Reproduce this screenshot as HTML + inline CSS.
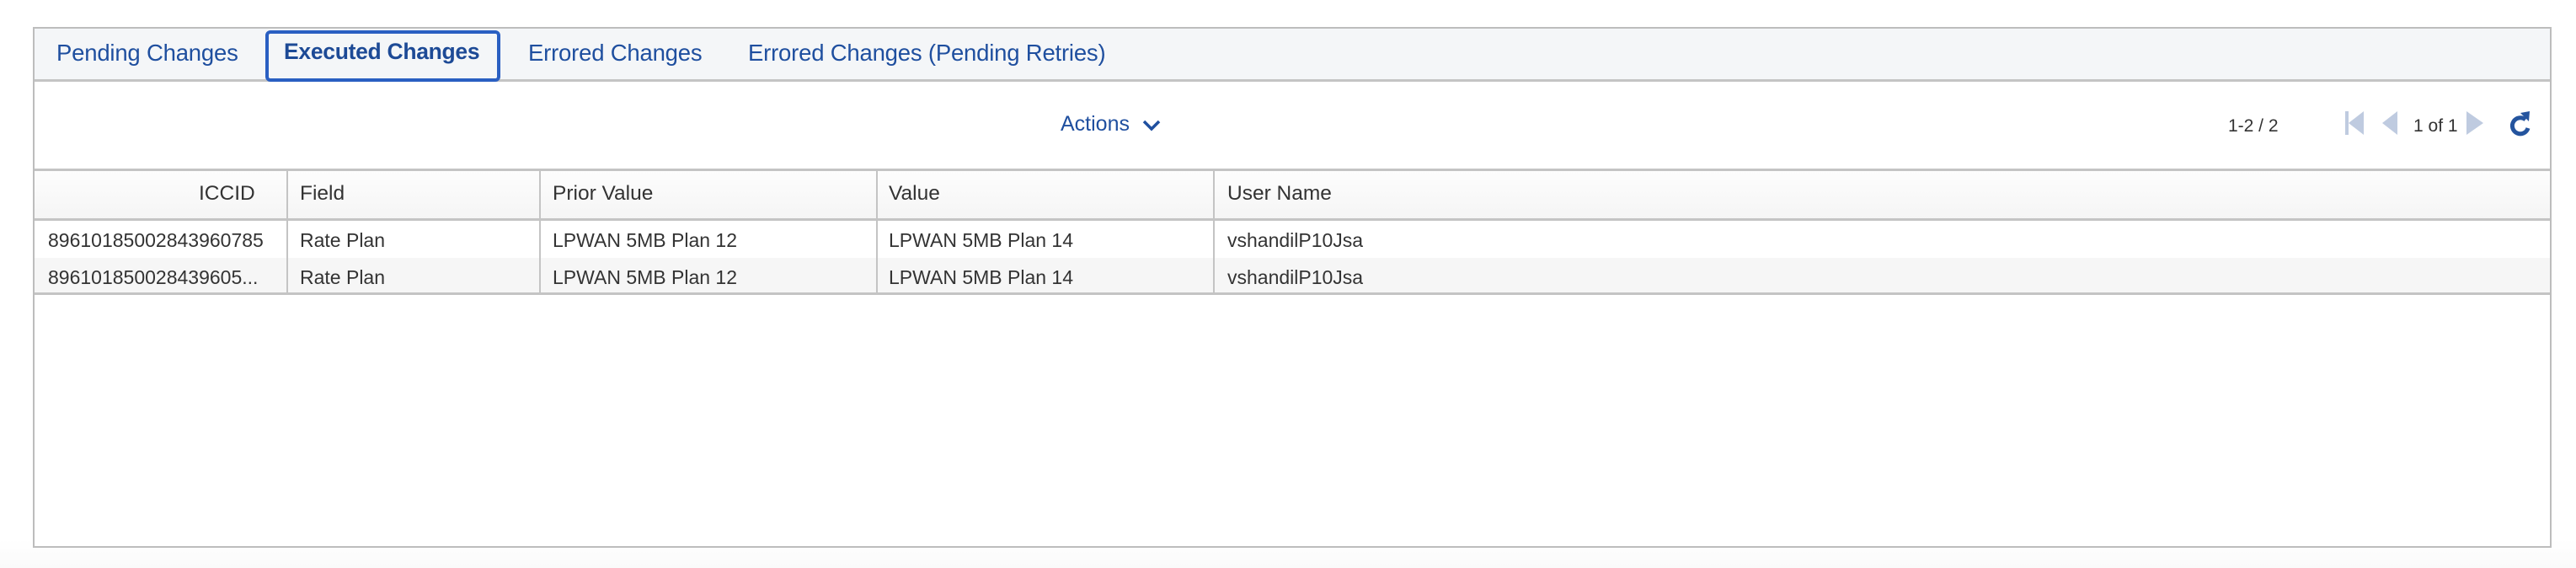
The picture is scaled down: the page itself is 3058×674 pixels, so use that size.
<!DOCTYPE html>
<html><head><meta charset="utf-8"><style>
*{margin:0;padding:0;box-sizing:border-box}
body{width:3058px;height:674px;background:linear-gradient(#fff 0,#fff 640px,#fafafa 674px);font-family:"Liberation Sans",sans-serif;position:relative;overflow:hidden}
.a{position:absolute;white-space:nowrap}
.box{position:absolute;left:39px;top:32px;width:2990px;height:618px;border:2px solid #bdbdbd;background:#fff}
.tabs{position:absolute;left:41px;top:34px;width:2986px;height:63px;background:#f4f6f8;border-bottom:3px solid #c4c4c4}
.tab{position:absolute;top:47px;font-size:27.5px;color:#1f4f9f;letter-spacing:-0.2px}
.act{position:absolute;left:315px;top:36px;width:279px;height:61px;border:4px solid #2a5fc2;border-radius:6px;background:#f4f6f8}
.hdr{position:absolute;left:41px;top:200px;width:2986px;height:62px;border-top:3px solid #c4c4c4;border-bottom:3px solid #c4c4c4;background:linear-gradient(#fdfdfd,#f5f5f5)}
.r2{position:absolute;left:41px;top:306px;width:2986px;height:42px;background:#f6f6f6}
.bot{position:absolute;left:41px;top:347px;width:2986px;height:3px;background:#c4c4c4}
.v{position:absolute;top:201px;width:2px;height:148px;background:#c4c4c4}
.h{font-size:24.5px;color:#333;top:216px}
.c{font-size:23px;color:#333}
</style></head><body>
<div class="box"></div>
<div class="tabs"></div>
<div class="act"></div>
<div class="a tab" style="left:67px">Pending Changes</div>
<div class="a tab" style="left:337px;font-weight:bold;color:#1d4a96;font-size:26.5px;letter-spacing:-0.3px;top:46px">Executed Changes</div>
<div class="a tab" style="left:627px">Errored Changes</div>
<div class="a tab" style="left:888px">Errored Changes (Pending Retries)</div>

<div class="a" style="left:1259px;top:133px;font-size:25px;color:#1f4f9f">Actions</div>
<svg class="a" style="left:1355px;top:140px" width="24" height="18" viewBox="0 0 24 18"><path d="M3 4 L12 13 L21 4" fill="none" stroke="#1f4f9f" stroke-width="3.5"/></svg>

<div class="a" style="left:2645px;top:138px;font-size:21px;color:#333">1-2 / 2</div>
<svg class="a" style="left:2784px;top:132px" width="24" height="30"><rect x="0" y="0" width="4" height="28" fill="#bfcbe0"/><path d="M4 14 L22 0 L22 28Z" fill="#bfcbe0"/></svg>
<svg class="a" style="left:2828px;top:132px" width="20" height="30"><path d="M0 14 L18 0 L18 28Z" fill="#bfcbe0"/></svg>
<div class="a" style="left:2865px;top:138px;font-size:21px;color:#333">1 of 1</div>
<svg class="a" style="left:2928px;top:132px" width="20" height="30"><path d="M20 14 L0 0 L0 28Z" fill="#bfcbe0"/></svg>
<svg class="a" style="left:2978px;top:130px" width="30" height="34" viewBox="0 0 30 34"><path d="M20 12 A9.5 9.5 0 1 0 23 22" fill="none" stroke="#24549e" stroke-width="5"/><path d="M14 4 L25 2 L24 14Z" fill="#24549e"/></svg>

<div class="hdr"></div>
<div class="r2"></div>
<div class="bot"></div>
<div class="v" style="left:340px"></div>
<div class="v" style="left:640px"></div>
<div class="v" style="left:1040px"></div>
<div class="v" style="left:1440px"></div>

<div class="a h" style="left:236px">ICCID</div>
<div class="a h" style="left:356px">Field</div>
<div class="a h" style="left:656px">Prior Value</div>
<div class="a h" style="left:1055px">Value</div>
<div class="a h" style="left:1457px">User Name</div>

<div class="a c" style="left:57px;top:272px">89610185002843960785</div>
<div class="a c" style="left:356px;top:272px">Rate Plan</div>
<div class="a c" style="left:656px;top:272px">LPWAN 5MB Plan 12</div>
<div class="a c" style="left:1055px;top:272px">LPWAN 5MB Plan 14</div>
<div class="a c" style="left:1457px;top:272px">vshandilP10Jsa</div>

<div class="a c" style="left:57px;top:316px">896101850028439605...</div>
<div class="a c" style="left:356px;top:316px">Rate Plan</div>
<div class="a c" style="left:656px;top:316px">LPWAN 5MB Plan 12</div>
<div class="a c" style="left:1055px;top:316px">LPWAN 5MB Plan 14</div>
<div class="a c" style="left:1457px;top:316px">vshandilP10Jsa</div>
</body></html>
